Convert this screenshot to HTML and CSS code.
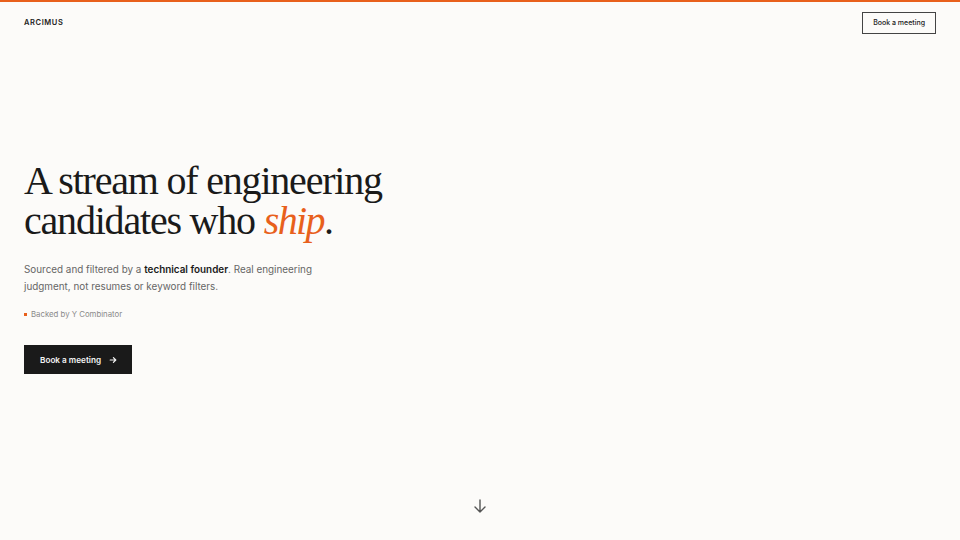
FILE: index.html
```html
<!DOCTYPE html>
<html lang="en">
<head>
<meta charset="utf-8">
<title>Arcimus</title>
<link rel="stylesheet" href="styles.css">
</head>
<body>
<div class="page">
  <header class="nav">
    <div class="logo">ARCIMUS</div>
    <a class="nav-btn" href="#">Book a meeting</a>
  </header>
  <main class="hero">
    <h1 class="title"><span class="line">A stream of engineering</span><span class="line">candidates who <em>ship</em>.</span></h1>
    <p class="lead">Sourced and filtered by a <strong>technical founder</strong>. Real engineering judgment, not resumes or keyword filters.</p>
    <div class="backed"><span class="dot"></span>Backed by Y Combinator</div>
    <a class="cta" href="#">Book a meeting
      <svg width="8" height="8" viewBox="0 0 10 10" fill="none" stroke="currentColor" stroke-width="1.5" stroke-linecap="round" stroke-linejoin="round"><path d="M1.5 5h7M5.5 2l3 3-3 3"/></svg>
    </a>
  </main>
  <div class="scroll">
    <svg width="16" height="16" viewBox="0 0 16 16" fill="none" stroke="#555" stroke-width="1.4" stroke-linecap="round" stroke-linejoin="round"><path d="M8 2v12M3 9l5 5 5-5"/></svg>
  </div>
</div>
</body>
</html>
```
FILE: styles.css
```css
* { box-sizing: border-box; }
html, body { margin: 0; padding: 0; }
body {
  background: #fcfbf9;
  font-family: Inter, "Noto Sans", sans-serif;
  color: #1a1a1a;
  border-top: 2px solid #e8601c;
  height: 540px;
  overflow: hidden;
}
.page {
  height: 538px;
  display: flex;
  flex-direction: column;
}
.nav {
  display: flex;
  justify-content: space-between;
  align-items: center;
  padding: 10px 24px 0 24px;
  height: 31px;
}
.logo {
  font-size: 7.5px;
  font-weight: 600;
  letter-spacing: 0.6px;
  color: #222;
}
.nav-btn {
  display: block;
  border: 1px solid #444;
  padding: 5px 10px 6px;
  font-size: 7px;
  font-weight: 500;
  color: #222;
  text-decoration: none;
  line-height: 9px;
}
.hero {
  padding: 128px 24px 0 24px;
}
.title {
  margin: 0;
  font-family: "Liberation Serif", "Times New Roman", serif;
  font-weight: 400;
  font-size: 40px;
  line-height: 40px;
  letter-spacing: -1.2px;
  color: #1a1a1a;
}
.title .line {
  display: block;
  white-space: nowrap;
}
.title em {
  color: #e8601c;
  font-style: italic;
  letter-spacing: -1.6px;
}
.lead {
  margin: 20px 0 0 0;
  max-width: 300px;
  font-size: 9.9px;
  line-height: 17px;
  color: #666;
}
.lead strong {
  color: #1a1a1a;
  font-weight: 600;
}
.backed {
  margin-top: 14px;
  display: flex;
  align-items: center;
  gap: 4px;
  font-size: 7.8px;
  color: #8a8a8a;
}
.dot {
  width: 3px;
  height: 3px;
  background: #e8601c;
  display: inline-block;
}
.cta {
  margin-top: 26px;
  display: inline-flex;
  align-items: center;
  gap: 8px;
  background: #1a1a1a;
  color: #f3f3f3;
  text-decoration: none;
  font-size: 8.2px;
  font-weight: 600;
  height: 29px;
  padding: 0 15px 0 16px;
}
.scroll {
  margin-top: auto;
  display: flex;
  justify-content: center;
  padding-bottom: 26px;
}
```
